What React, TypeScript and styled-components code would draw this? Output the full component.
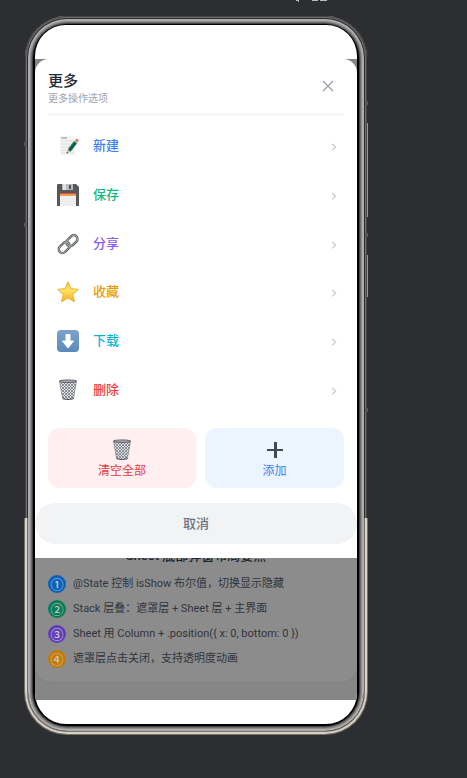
import React from "react";
import styled, { createGlobalStyle } from "styled-components";

const GlobalStyle = createGlobalStyle`
  *, *::before, *::after { box-sizing: border-box; }
  body {
    margin: 0;
    background: #2d2e32;
    font-family: Roboto, "Noto Sans CJK SC", sans-serif;
  }
  button { font: inherit; border: 0; padding: 0; background: none; cursor: pointer; }
  h1, h2, p, ul, ol { margin: 0; padding: 0; list-style: none; font-weight: 400; }
  svg { display: block; }
`;

const Page = styled.div`
  min-height: 100vh;
  padding: 0 100px 42px 25px;
`;

const TopStrip = styled.div`
  height: 16px;
  display: flex;
  justify-content: flex-end;
  padding-right: 38px;
`;

const Phone = styled.div`
  position: relative;
  padding: 9px 10px 10px;
  border-radius: 42px;
  background: #000;
  box-shadow:
    inset 0 0 0 1px #454543,
    inset 0 0 0 2px #6d6d6f,
    inset 0 0 0 3px #2e2e2e,
    inset 0 0 0 5px #acacac,
    inset 0 0 0 6px #8c8c8c,
    inset 0 0 0 7px #6c6c6c,
    inset 0 0 0 8px #424242;
`;

const LowerRim = styled.div`
  position: absolute;
  inset: 502px 0 0 0;
  border: 2px solid #d9d1c4;
  border-top: 0;
  border-radius: 0 0 42px 42px;
  box-shadow: inset 1px -1px 0 #77736c, inset -1px 0 0 #77736c, 0 0 0 1px #746f66;
  clip-path: inset(0 -1px -1px -1px);
`;

const SideKey = styled.div<{ $top: number; $length: number }>`
  position: absolute;
  right: -1px;
  top: ${(p) => p.$top}px;
  width: 1px;
  height: ${(p) => p.$length}px;
  background: #9b9b9b;
`;

const Antenna = styled.div<{ $side: "left" | "right"; $top: number }>`
  position: absolute;
  ${(p) => p.$side}: -1px;
  top: ${(p) => p.$top}px;
  width: 3px;
  height: 4px;
  background: #555656;
`;

const Screen = styled.main`
  position: relative;
  padding: 34px 0 24px;
  border-radius: 31px;
  overflow: hidden;
  background: #fff;
`;

const Stage = styled.div`
  display: grid;
  background: #868686;
`;

const Backdrop = styled.div`
  grid-area: 1 / 1;
  align-self: end;
  padding-bottom: 18px;
`;

const NotesCard = styled.section`
  padding: 0 13px 14px;
  border-radius: 16px;
  background: #8c8c8c;
  box-shadow: 0 1px 2px #828282;
`;

const NotesTitle = styled.h2`
  font-size: 13px;
  line-height: 20px;
  font-weight: 500;
  text-align: center;
  color: #20242b;
`;

const Notes = styled.ol`
  display: grid;
  gap: 7px;
  padding-top: 9px;
`;

const Note = styled.li`
  display: flex;
  align-items: center;
  gap: 7px;
  font-size: 11px;
  line-height: 18px;
  color: #30353d;
`;

const Badge = styled.span<{ $color: string }>`
  flex: none;
  display: flex;
  align-items: center;
  justify-content: center;
  width: 18px;
  height: 18px;
  border-radius: 50%;
  background: ${(p) => p.$color};
  color: #c4c7ca;
  font-family: "Noto Sans CJK SC", sans-serif;
  font-size: 13px;
  font-weight: 500;
  line-height: 18px;
`;

const Sheet = styled.section`
  grid-area: 1 / 1;
  z-index: 1;
  margin-bottom: 142px;
  padding-bottom: 14px;
  border-radius: 14px 14px 0 0;
  background: #fff;
`;

const Header = styled.header`
  display: flex;
  align-items: flex-start;
  justify-content: space-between;
  margin: 0 13px;
  padding: 12px 9px 8px 0;
  border-bottom: 1px solid #f1f1f3;
`;

const Title = styled.h1`
  font-size: 15px;
  line-height: 20px;
  font-weight: 500;
  color: #1f2937;
`;

const Subtitle = styled.p`
  font-size: 10px;
  line-height: 15px;
  color: #9ca3af;
`;

const CloseButton = styled.button`
  width: 14px;
  height: 14px;
  margin-top: 8px;
  color: #9498a5;
`;

const Actions = styled.ul`
  display: grid;
  grid-auto-rows: 1fr;
  height: 292px;
  margin: 7px 13px 0;
`;

const ActionRow = styled.button<{ $color: string }>`
  display: flex;
  align-items: center;
  gap: 14px;
  width: 100%;
  height: 100%;
  padding: 0 7px 0 9px;
  color: ${(p) => p.$color};
  font-size: 13px;
  line-height: 20px;
  font-weight: 500;
  text-align: left;
`;

const ActionLabel = styled.span`
  flex: 1;
`;

const Tiles = styled.div`
  display: grid;
  grid-template-columns: 16fr 15fr;
  gap: 9px;
  margin: 14px 13px 15px;
`;

const Tile = styled.button<{ $color: string; $fill: string }>`
  display: flex;
  flex-direction: column;
  align-items: center;
  padding: 11px 0 7px;
  border-radius: 12px;
  background: ${(p) => p.$fill};
  color: ${(p) => p.$color};
  font-size: 12px;
  line-height: 20px;
`;

const Cancel = styled.button`
  display: block;
  width: 100%;
  padding: 11px 0 10px;
  border-radius: 21px;
  background: #f2f3f5;
  color: #6b7280;
  font-size: 13px;
  line-height: 20px;
  font-weight: 500;
`;

const Chevron = () => (
  <svg width="6" height="12" viewBox="0 0 6 12" fill="none" stroke="#c6c9cf" strokeWidth="1.2">
    <path d="M1.2 4 4.6 7.2 1.2 10.4" />
  </svg>
);

const Memo = () => (
  <svg width="22" height="22" viewBox="0 0 22 22">
    <path d="M3 1h15v19H3z" fill="#f5f5f4" />
    <path d="M4 3h6" stroke="#8d8d8d" />
    <path d="M4 6h13M4 9h13M4 12h13M4 15h13M4 18h13" stroke="#d2d4d6" strokeWidth=".8" />
    <path d="m9.5 18.5 1.4-4.4 2.7 2.6z" fill="#dcb681" />
    <path d="m9.5 18.5.5-1.7 1.1 1.1z" fill="#2b2f30" />
    <path d="m10.9 14.1 6.2-8 2.9 2.4-6.4 8.2z" fill="#16705b" />
    <path d="m12.5 15.4 6-7.8" stroke="#0b4639" strokeWidth="1" />
    <path d="m17.1 6.1 1-1.2 2.8 2.3-.9 1.3z" fill="#b8b8b5" />
    <path d="m18.1 4.9 1-.9c1-.6 2.6.6 2.4 1.7l-.6 1.5z" fill="#e7685c" />
  </svg>
);

const Floppy = () => (
  <svg width="22" height="22" viewBox="0 0 22 22">
    <path d="M0 1q0-1 1-1h18l3 3v19H0z" fill="#565758" />
    <path d="M5 0h11v6H5z" fill="#b9bbbd" />
    <path d="M6 0h3v6H6z" fill="#e2e3e4" />
    <path d="M12 1h2v4h-2z" fill="#555" />
    <path d="M3 9h16v13H3z" fill="#eeeef0" />
    <path d="M3 9h16v1H3z" fill="#d35143" />
    <path d="M3 10h16v2H3z" fill="#eea04f" />
  </svg>
);

const Link = () => (
  <svg width="22" height="22" viewBox="0 0 22 22" fill="none" strokeLinecap="round">
    <g stroke="#5c5f61" strokeWidth="2.4">
      <rect x="8.7" y="4" width="12.5" height="7.400" rx="3.700" transform="rotate(-45 15 7.7)" />
      <rect x="1" y="10.800" width="12.5" height="7.400" rx="3.700" transform="rotate(-45 7.2 14.5)" />
    </g>
    <g stroke="#b9bcbe" strokeWidth=".8">
      <rect x="8.7" y="4" width="12.5" height="7.400" rx="3.700" transform="rotate(-45 15 7.7)" />
      <rect x="1" y="10.800" width="12.5" height="7.400" rx="3.700" transform="rotate(-45 7.2 14.5)" />
    </g>
  </svg>
);

const Star = () => (
  <svg width="22" height="22" viewBox="0 0 22 22">
    <defs>
      <linearGradient id="star" x1="0" y1="0" x2="0" y2="1">
        <stop offset="0" stopColor="#f8c62d" />
        <stop offset=".4" stopColor="#ffe467" />
        <stop offset="1" stopColor="#f6ae1c" />
      </linearGradient>
    </defs>
    <path
      d="m11 .8 3 6.8 7.3.8-5.5 5 1.6 7.4-6.4-3.7-6.4 3.7 1.6-7.4-5.5-5L8 7.6z"
      fill="url(#star)"
      stroke="#e9a51f"
      strokeWidth=".8"
      strokeLinejoin="round"
    />
  </svg>
);

const Download = () => (
  <svg width="22" height="22" viewBox="0 0 22 22">
    <defs>
      <linearGradient id="down" x1="0" y1="0" x2="0" y2="1">
        <stop offset="0" stopColor="#7ba3cc" />
        <stop offset="1" stopColor="#5c89b9" />
      </linearGradient>
    </defs>
    <rect width="22" height="22" rx="4" fill="url(#down)" />
    <path d="M9 4.500h4V11h3.500L11 18l-5.500-7H9z" fill="#fff" stroke="#fff" strokeLinejoin="round" />
  </svg>
);

const Bin = () => (
  <svg width="22" height="22" viewBox="0 0 22 22">
    <defs>
      <pattern id="mesh" width="3" height="3" patternUnits="userSpaceOnUse">
        <path d="M0 0l3 3M3 0L0 3" stroke="#666871" strokeWidth=".7" />
      </pattern>
    </defs>
    <path d="M2.5 2h17l-3 18q-5.5 2-11 0z" fill="#e2e3e6" />
    <path d="M2.5 2h17l-3 18q-5.5 2-11 0z" fill="url(#mesh)" />
    <path d="M2.5 2.5 5.7 20M19.5 2.5 16.300 20" stroke="#85878e" strokeWidth=".7" />
    <ellipse cx="11" cy="2.200" rx="8.700" ry="1.300" fill="#a5a7ad" stroke="#50525c" strokeWidth=".8" />
    <path d="M5.5 19.600q5.500 2 11 0" fill="none" stroke="#50525c" strokeWidth="1" />
  </svg>
);

const Plus = () => (
  <svg width="22" height="22" viewBox="0 0 22 22">
    <path d="M10 3h3v7h6v2h-6v7h-3v-7H3v-2h7z" fill="#44484f" />
  </svg>
);

const actions = [
  { label: "新建", color: "#3b82f6", Icon: Memo },
  { label: "保存", color: "#10b981", Icon: Floppy },
  { label: "分享", color: "#8b5cf6", Icon: Link },
  { label: "收藏", color: "#e99b0b", Icon: Star },
  { label: "下载", color: "#06b6d4", Icon: Download },
  { label: "删除", color: "#ef4444", Icon: Bin },
];

const notes = [
  { mark: "①", color: "#0961bd", text: "@State 控制 isShow 布尔值，切换显示隐藏" },
  { mark: "②", color: "#087d56", text: "Stack 层叠：遮罩层 + Sheet 层 + 主界面" },
  { mark: "③", color: "#653cba", text: "Sheet 用 Column + .position({ x: 0, bottom: 0 })" },
  { mark: "④", color: "#c67a03", text: "遮罩层点击关闭，支持透明度动画" },
];

export default function App() {
  return (
    <Page>
      <GlobalStyle />
      <TopStrip>
        <svg width="34" height="3" viewBox="0 0 34 3" fill="#b9babd" aria-hidden="true">
          <path d="M1 0h3v2H3V1H1zM17 0h6v1h-6zM25 0h7v1h-7z" />
        </svg>
      </TopStrip>
      <Phone>
        <LowerRim />
        <SideKey $top={107} $length={94} />
        <SideKey $top={239} $length={42} />
        <Antenna $side="right" $top={85} />
        <Antenna $side="right" $top={217} />
        <Antenna $side="right" $top={392} />
        <Antenna $side="left" $top={126} />
        <Antenna $side="left" $top={207} />
        <Screen>
          <Stage>
            <Backdrop>
              <NotesCard>
                <NotesTitle>Sheet 底部弹窗布局要点</NotesTitle>
                <Notes>
                  {notes.map((n) => (
                    <Note key={n.mark}>
                      <Badge $color={n.color}>{n.mark}</Badge>
                      <span>{n.text}</span>
                    </Note>
                  ))}
                </Notes>
              </NotesCard>
            </Backdrop>
            <Sheet>
              <Header>
                <div>
                  <Title>更多</Title>
                  <Subtitle>更多操作选项</Subtitle>
                </div>
                <CloseButton aria-label="关闭">
                  <svg width="14" height="14" viewBox="0 0 14 14" stroke="currentColor" strokeWidth="1.1">
                    <path d="M2 2l10 10M12 2L2 12" />
                  </svg>
                </CloseButton>
              </Header>
              <Actions>
                {actions.map(({ label, color, Icon }) => (
                  <li key={label}>
                    <ActionRow $color={color}>
                      <Icon />
                      <ActionLabel>{label}</ActionLabel>
                      <Chevron />
                    </ActionRow>
                  </li>
                ))}
              </Actions>
              <Tiles>
                <Tile $color="#e53940" $fill="#ffeff0">
                  <Bin />
                  清空全部
                </Tile>
                <Tile $color="#3b82f6" $fill="#ecf5ff">
                  <Plus />
                  添加
                </Tile>
              </Tiles>
              <Cancel>取消</Cancel>
            </Sheet>
          </Stage>
        </Screen>
      </Phone>
    </Page>
  );
}
